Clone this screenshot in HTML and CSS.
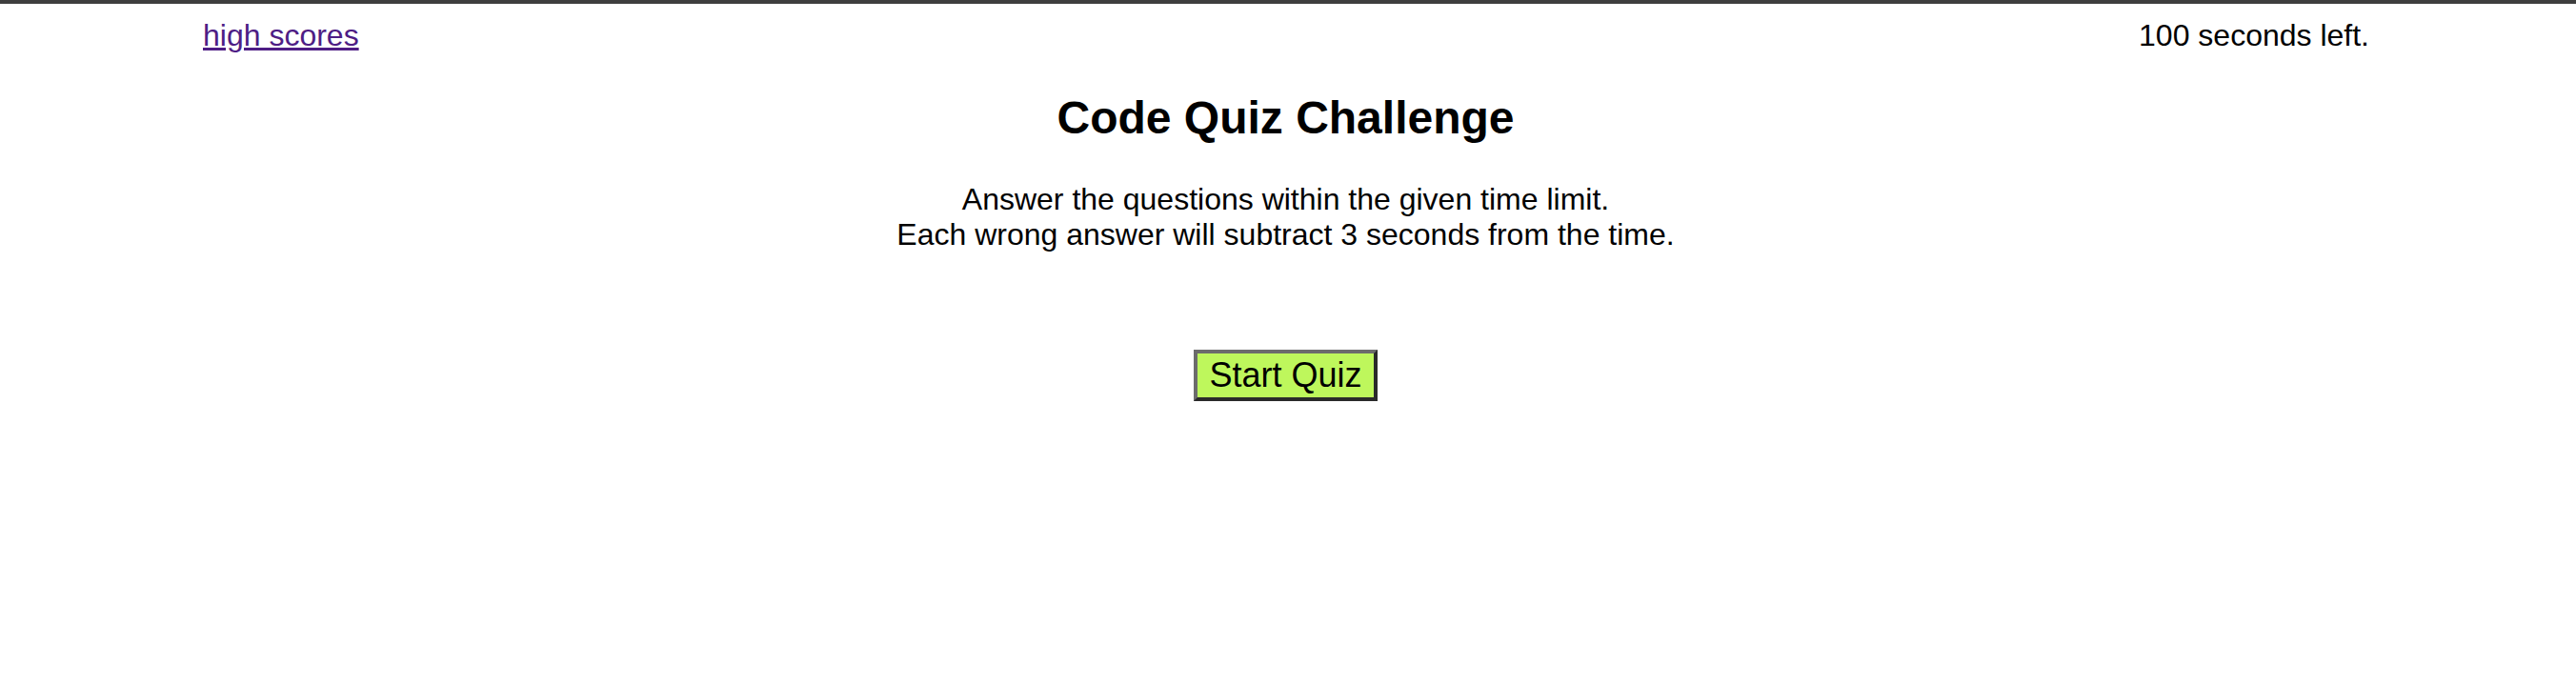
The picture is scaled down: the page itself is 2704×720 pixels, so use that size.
FILE: index.html
```html
<!DOCTYPE html>
<html lang="en">
<head>
<meta charset="utf-8">
<title>Code Quiz</title>
<link rel="stylesheet" href="styles.css">
</head>
<body>
<header class="topbar">
  <a class="scores-link" href="#">high scores</a>
  <span class="timer">100 seconds left.</span>
</header>
<main class="intro">
  <h2 class="title">Code Quiz Challenge</h2>
  <p class="rules">Answer the questions within the given time limit.<br>Each wrong answer will subtract 3 seconds from the time.</p>
  <div class="actions">
    <button class="start-btn" type="button">Start Quiz</button>
  </div>
</main>
</body>
</html>
```
FILE: styles.css
```css
html, body {
  margin: 0;
  padding: 0;
  background: #ffffff;
}

body {
  font-family: "Liberation Sans", Arial, Helvetica, sans-serif;
  font-size: 32px;
  color: #000000;
  border-top: 4px solid #3e3e3e;
}

.topbar {
  display: flex;
  justify-content: space-between;
  align-items: baseline;
  padding: 15px 217px 0 213px;
}

.scores-link {
  color: #4e1d85;
  text-decoration: underline;
}

.timer {
  color: #000000;
}

.intro {
  display: flex;
  flex-direction: column;
  align-items: center;
  padding: 0 5px 0 0;
}

.title {
  font-size: 48px;
  font-weight: bold;
  margin: 40px 0 0 0;
  text-align: center;
}

.rules {
  margin: 40px 0 0 0;
  text-align: center;
}

.actions {
  margin-top: 102px;
  display: flex;
  justify-content: center;
}

.start-btn {
  font-family: "Liberation Sans", Arial, Helvetica, sans-serif;
  font-size: 36px;
  color: #000000;
  background: #bef75c;
  padding: 2px 12px;
  border-style: solid;
  border-width: 4px;
  border-color: #6c6c6c #2a2a2a #2a2a2a #6c6c6c;
  line-height: normal;
  cursor: pointer;
}
```
